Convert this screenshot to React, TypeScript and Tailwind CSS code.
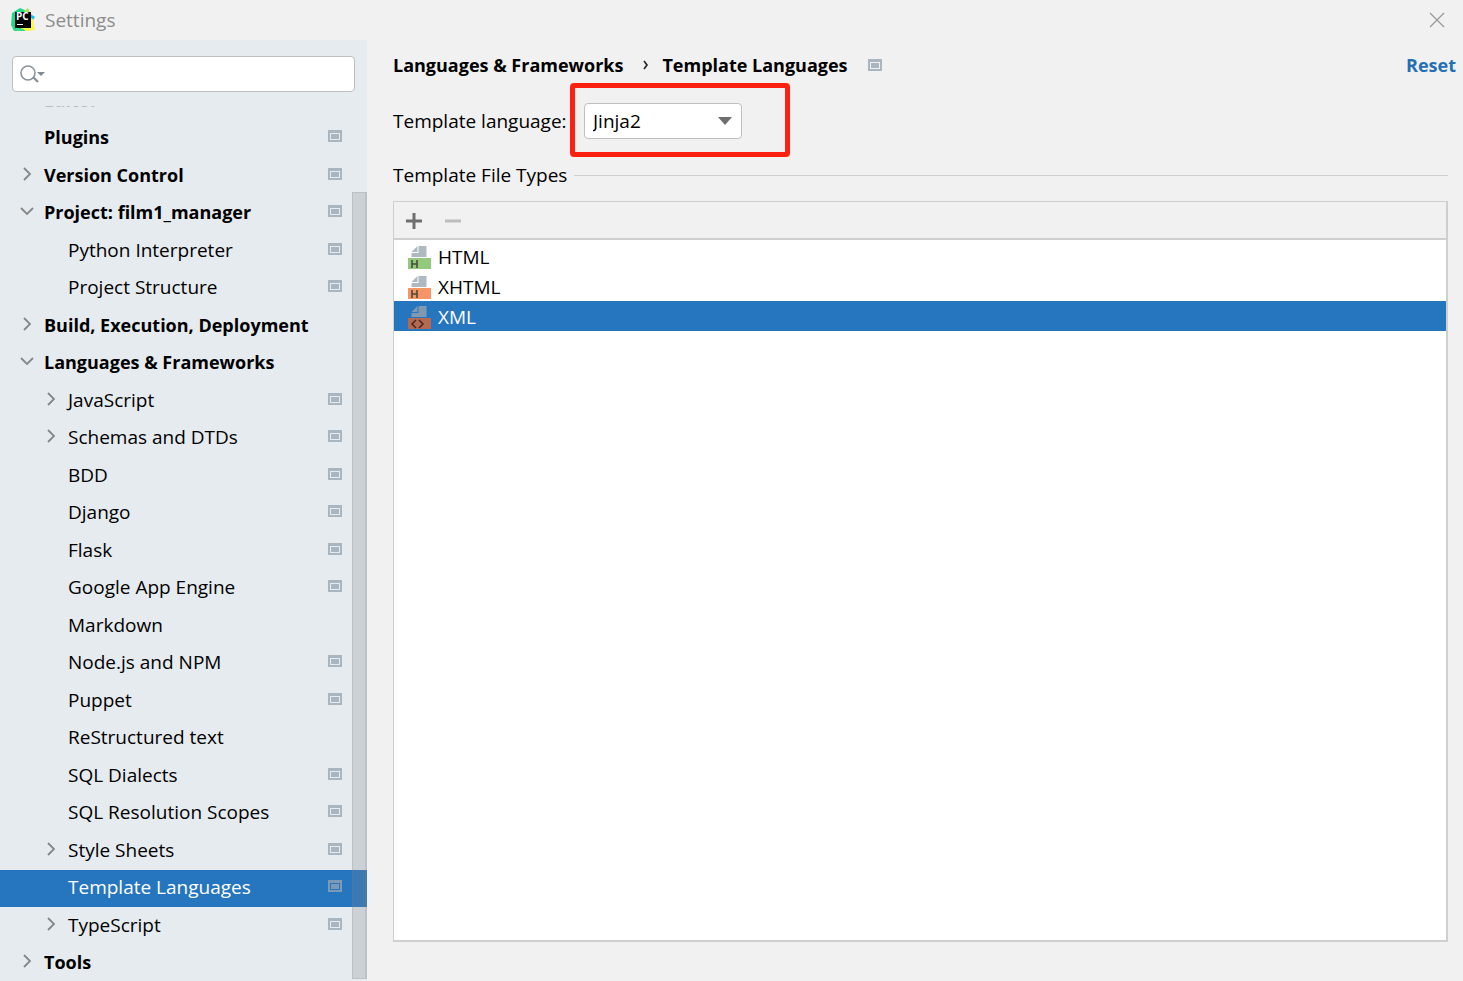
import clsx from "clsx";

type TreeItem = {
  label: string;
  level: 0 | 1;
  arrow?: "open" | "closed";
  badge?: boolean;
  selected?: boolean;
};

const treeItems: TreeItem[] = [
  { label: "Plugins", level: 0, badge: true },
  { label: "Version Control", level: 0, arrow: "closed", badge: true },
  { label: "Project: film1_manager", level: 0, arrow: "open", badge: true },
  { label: "Python Interpreter", level: 1, badge: true },
  { label: "Project Structure", level: 1, badge: true },
  { label: "Build, Execution, Deployment", level: 0, arrow: "closed" },
  { label: "Languages & Frameworks", level: 0, arrow: "open" },
  { label: "JavaScript", level: 1, arrow: "closed", badge: true },
  { label: "Schemas and DTDs", level: 1, arrow: "closed", badge: true },
  { label: "BDD", level: 1, badge: true },
  { label: "Django", level: 1, badge: true },
  { label: "Flask", level: 1, badge: true },
  { label: "Google App Engine", level: 1, badge: true },
  { label: "Markdown", level: 1 },
  { label: "Node.js and NPM", level: 1, badge: true },
  { label: "Puppet", level: 1, badge: true },
  { label: "ReStructured text", level: 1 },
  { label: "SQL Dialects", level: 1, badge: true },
  { label: "SQL Resolution Scopes", level: 1, badge: true },
  { label: "Style Sheets", level: 1, arrow: "closed", badge: true },
  { label: "Template Languages", level: 1, badge: true, selected: true },
  { label: "TypeScript", level: 1, arrow: "closed", badge: true },
  { label: "Tools", level: 0, arrow: "closed" },
];

const fileTypes = [
  { label: "HTML", color: "#93c97c", mark: "H" },
  { label: "XHTML", color: "#f59566", mark: "H" },
  { label: "XML", color: "#b5694f", mark: "<>", selected: true },
];

function PyCharmLogo() {
  return (
    <svg width="24" height="24" viewBox="0 0 24 24" aria-hidden="true">
      <path d="M1 5 9 0l7 3-2 20-11 0L0 17Z" fill="#21d789" />
      <path d="M13 3 17 0l2 5-3 3Z" fill="#a5e84f" />
      <path d="m18 5 6 4-3 5-4-4Z" fill="#07c3f2" />
      <path d="m20 10 2 1 2 11-9 1-5-3Z" fill="#fcf84a" />
      <path d="m3 23 9 0-5-6Z" fill="#3ddc84" />
      <rect x="4" y="4" width="16" height="16" fill="#000" />
      <text x="5" y="12" fontSize="10" fontWeight="700" fill="#fff" fontFamily="Open Sans, sans-serif">
        PC
      </text>
      <rect x="6" y="16" width="6" height="1" fill="#fff" />
    </svg>
  );
}

function ProjectBadge({ selected }: { selected?: boolean }) {
  return (
    <svg width="14" height="12" viewBox="0 0 14 12" className="shrink-0" aria-hidden="true">
      <path
        d="M0 0h14v12H0zM2 3v7h10V3z"
        fillRule="evenodd"
        fill={selected ? "#7d9ab5" : "#a9b6bf"}
      />
      <rect x="3" y="4" width="8" height="5" fill={selected ? "#7d9ab5" : "#a9b6bf"} />
    </svg>
  );
}

function Arrow({ state }: { state?: "open" | "closed" }) {
  return (
    <svg width="14" height="14" viewBox="0 0 14 14" className="mb-0.5 shrink-0" aria-hidden="true">
      {state && (
        <path
          d={state === "open" ? "M1 4l6 6 6-6" : "M4 1l6 6-6 6"}
          fill="none"
          stroke="#858789"
          strokeWidth="1.8"
        />
      )}
    </svg>
  );
}

function FileIcon({ color, mark, selected }: { color: string; mark: string; selected?: boolean }) {
  const page = selected ? "#8099b0" : "#aeb9c0";
  return (
    <svg width="23" height="23" viewBox="0 0 23 23" className="mt-0.5 shrink-0" aria-hidden="true">
      <path d="M3.5 6 9.5 0v6z" fill={page} />
      <path d="M10.5 0h8v11h-15V7h7z" fill={page} />
      <rect y="12" width="23" height="11" fill={color} />
      {mark === "H" ? (
        <path d="M4 14v8M9 14v8M4 18h5" stroke="#4b4b3f" strokeWidth="1.6" fill="none" />
      ) : (
        <path d="m8 14-4 4 4 4m3-8 4 4-4 4" stroke="#4a2a20" strokeWidth="1.6" fill="none" />
      )}
    </svg>
  );
}

function TitleBar() {
  return (
    <header className="flex h-10 shrink-0 items-center justify-between pr-[18px] pl-[11px]">
      <div className="flex items-center gap-[10px]">
        <PyCharmLogo />
        <h1 className="text-[#8c8c8c]">Settings</h1>
      </div>
      <button type="button" aria-label="Close">
        <svg width="16" height="16" viewBox="0 0 16 16" aria-hidden="true">
          <path d="m1 1 14 14M15 1 1 15" stroke="#999" strokeWidth="1.3" />
        </svg>
      </button>
    </header>
  );
}

function TreeRow({ item }: { item: TreeItem }) {
  return (
    <li
      className={clsx(
        "flex h-[37px] items-center gap-[10px] pr-[25px] pb-1 even:h-[38px] even:pb-0.5",
        item.level === 0 ? "pl-5 text-[18px] font-bold" : "pl-11",
        item.selected && "bg-[#2675bf] text-white",
      )}
    >
      <Arrow state={item.arrow} />
      <a href="#" className="flex-1 whitespace-nowrap">
        {item.label}
      </a>
      {item.badge && (
        <span className="mb-0.5">
          <ProjectBadge selected={item.selected} />
        </span>
      )}
    </li>
  );
}

function Sidebar() {
  return (
    <aside className="flex w-[367px] shrink-0 flex-col bg-[#e6ebef] pt-4">
      <label className="mx-3 flex h-9 shrink-0 items-center rounded border border-[#bfbfbf] bg-white pl-[7px]">
        <svg width="26" height="20" viewBox="0 0 26 20" className="shrink-0" aria-hidden="true">
          <circle cx="8" cy="9" r="7" fill="none" stroke="#8b949b" strokeWidth="1.6" />
          <path d="m13 13 5 5" stroke="#8b949b" strokeWidth="2.4" />
          <path d="M17 8h8l-4 4z" fill="#7f8b91" />
        </svg>
        <input type="text" aria-label="Search settings" className="min-w-0 flex-1 outline-none" />
      </label>

      <nav className="relative mt-[14px] min-h-0 flex-1 overflow-hidden">
        {/* row scrolled almost out of view */}
        <div className="flex h-[14px] items-end overflow-hidden pl-11 text-[18px] font-bold leading-[40px] text-[#b8bdc1]">
          Editor
        </div>
        <ul>
          {treeItems.map((item) => (
            <TreeRow key={item.label} item={item} />
          ))}
        </ul>
        <div className="absolute top-[86px] right-0 bottom-[2px] w-[15px] border border-r-2 border-[#80828733] bg-[#80828740]" />
      </nav>
    </aside>
  );
}

function LanguagePicker() {
  return (
    <div className="flex h-9 items-center">
      <label htmlFor="template-language" className="w-[191px] pb-px">
        Template language:
      </label>
      <div className="relative">
        <select
          id="template-language"
          className="block h-9 w-[158px] appearance-none rounded border border-[#bfbfbf] bg-white pl-2 outline-none"
        >
          <option>Jinja2</option>
        </select>
        <svg
          width="14"
          height="8"
          viewBox="0 0 14 8"
          className="pointer-events-none absolute top-[14px] right-[10px]"
          aria-hidden="true"
        >
          <path d="M0 0h14L7 8z" fill="#6e6e6e" />
        </svg>
        <div className="pointer-events-none absolute -top-5 -left-[14px] h-[74px] w-[220px] rounded border-5 border-[#ff2012]" />
      </div>
    </div>
  );
}

function FileTypesPanel() {
  return (
    <div className="mt-[14px] flex min-h-0 flex-1 flex-col border border-r-2 border-b-2 border-[#cfcfcf] bg-white">
      <div className="flex h-[38px] shrink-0 items-center gap-[23px] border-b-2 border-[#cfcfcf] bg-[#f1f1f1] pt-px pl-3">
        <button type="button" aria-label="Add">
          <svg width="16" height="16" viewBox="0 0 16 16" className="block" aria-hidden="true">
            <path d="M8 0v16M0 8h16" stroke="#6e6e6e" strokeWidth="3" />
          </svg>
        </button>
        <button type="button" aria-label="Remove" disabled>
          <svg width="16" height="16" viewBox="0 0 16 16" className="block" aria-hidden="true">
            <path d="M0 8h16" stroke="#bdbdbd" strokeWidth="3" />
          </svg>
        </button>
      </div>
      <ul className="pt-px">
        {fileTypes.map((type) => (
          <li
            key={type.label}
            className={clsx(
              "flex h-[30px] items-center gap-[7px] pt-px pl-[14px]",
              type.selected && "bg-[#2675bf] text-white",
            )}
          >
            <FileIcon color={type.color} mark={type.mark} selected={type.selected} />
            {type.label}
          </li>
        ))}
      </ul>
    </div>
  );
}

export default function App() {
  return (
    <div className="flex h-screen flex-col overflow-hidden bg-[#f1f1f1] font-['Open_Sans','Noto_Sans',sans-serif] text-[19px] leading-6 text-black">
      <TitleBar />
      <div className="flex min-h-0 flex-1">
        <Sidebar />
        <main className="flex min-w-0 flex-1 flex-col pt-[13px] pr-[7px] pb-[39px] pl-[26px]">
          <div className="flex items-center justify-between text-[18px] font-bold">
            <div className="flex items-center">
              <span>Languages &amp; Frameworks</span>
              <svg width="6" height="10" viewBox="0 0 6 10" className="mr-[13px] ml-5" aria-hidden="true">
                <path d="m1 1 3 4-3 4" fill="none" stroke="#222" strokeWidth="1.6" />
              </svg>
              <h2 className="mr-5">Template Languages</h2>
              <ProjectBadge />
            </div>
            <a href="#" className="text-[#2470b3]">
              Reset
            </a>
          </div>

          <div className="mt-[26px]">
            <LanguagePicker />
          </div>

          <div className="mt-6 flex min-h-0 flex-1 flex-col pr-2">
            <div className="flex items-center gap-[7px]">
              <h3>Template File Types</h3>
              <div className="h-px flex-1 bg-[#cfcfcf]" />
            </div>
            <FileTypesPanel />
          </div>
        </main>
      </div>
    </div>
  );
}
